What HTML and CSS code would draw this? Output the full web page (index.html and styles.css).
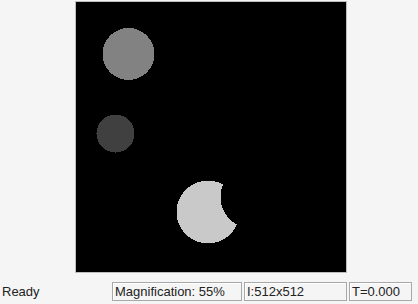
FILE: index.html
```html
<!DOCTYPE html>
<html lang="en">

<head>
    <meta charset="UTF-8">
    <title>Image Viewer</title>
    <link rel="stylesheet" href="styles.css">
</head>

<body>

    <div class="viewer">
        <div class="canvas-frame">
            <svg class="canvas" width="270" height="270" viewBox="0 0 270 270">
                <defs>
                    <mask id="bite">
                        <rect width="270" height="270" fill="#fff" />
                        <circle cx="176" cy="195" r="31.5" fill="#000" />
                    </mask>
                </defs>
                <rect width="270" height="270" fill="#000" />
                <circle cx="52.5" cy="52" r="26" fill="#828282" />
                <circle cx="39.5" cy="131.5" r="19" fill="#404040" />
                <circle cx="132" cy="210" r="31.5" fill="#c9c9c9" mask="url(#bite)" />
            </svg>
        </div>
    </div>

    <div class="status-bar">
        <span class="status-label">Ready</span>
        <span class="status-panel panel-mag">Magnification: 55%</span>
        <span class="status-panel panel-size">I:512x512</span>
        <span class="status-panel panel-time">T=0.000</span>
    </div>

</body>

</html>
```

FILE: styles.css
```css
* {
    box-sizing: border-box;
}

body {
    margin: 0;
    padding: 0;
    background: #f5f5f5;
    font-family: 'Liberation Sans', Arial, sans-serif;
    font-size: 13px;
    color: #222;
    width: 418px;
    height: 304px;
    overflow: hidden;
}

.viewer {
    display: flex;
    justify-content: center;
    padding-top: 1px;
    padding-left: 4px;
}

.canvas-frame {
    border: 1px solid #bdbdbd;
    width: 272px;
    height: 272px;
}

.canvas {
    display: block;
    shape-rendering: crispEdges;
}

.status-bar {
    display: flex;
    align-items: center;
    margin-top: 9px;
    padding: 0 6px 0 2px;
    height: 19px;
}

.status-label {
    flex: 1;
}

.status-panel {
    height: 19px;
    line-height: 17px;
    padding: 0 2px;
    border: 1px solid #a8a8a8;
    box-shadow: inset 1px 1px #fff;
    margin-left: 2px;
    white-space: nowrap;
    overflow: hidden;
}

.panel-mag {
    width: 130px;
}

.panel-size {
    width: 103px;
}

.panel-time {
    width: 63px;
}
```
